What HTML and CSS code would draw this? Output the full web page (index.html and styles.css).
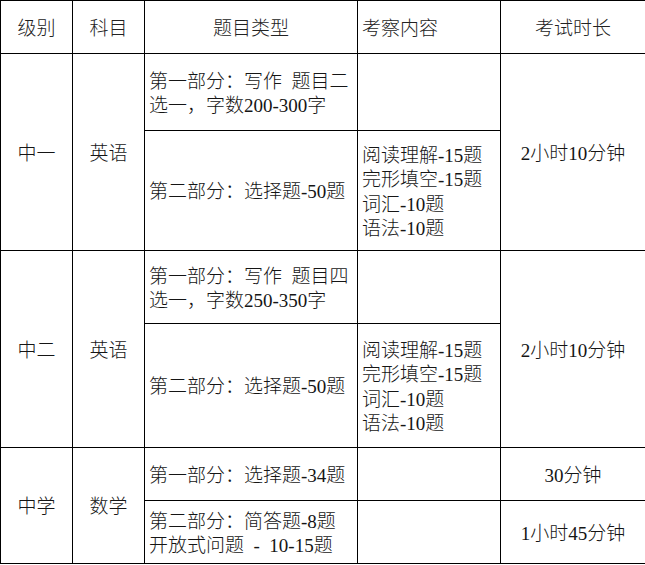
FILE: index.html
```html
<!DOCTYPE html>
<html lang="zh">
<head>
<meta charset="utf-8">
<title>考试安排</title>
<link rel="stylesheet" href="styles.css">
</head>
<body>
<table class="exam">
  <colgroup>
    <col class="c1"><col class="c2"><col class="c3"><col class="c4"><col class="c5">
  </colgroup>
  <tr class="h-head">
    <th>级别</th>
    <th>科目</th>
    <th>题目类型</th>
    <th class="left">考察内容</th>
    <th>考试时长</th>
  </tr>
  <tr class="h-r1a">
    <td rowspan="2" class="center">中一</td>
    <td rowspan="2" class="center">英语</td>
    <td class="left">第一部分：写作 题目二<br>选一，字数200-300字</td>
    <td class="left"></td>
    <td rowspan="2" class="center">2小时10分钟</td>
  </tr>
  <tr class="h-r1b">
    <td class="left">第二部分：选择题-50题</td>
    <td class="left">阅读理解-15题<br>完形填空-15题<br>词汇-10题<br>语法-10题</td>
  </tr>
  <tr class="h-r2a">
    <td rowspan="2" class="center">中二</td>
    <td rowspan="2" class="center">英语</td>
    <td class="left">第一部分：写作 题目四<br>选一，字数250-350字</td>
    <td class="left"></td>
    <td rowspan="2" class="center">2小时10分钟</td>
  </tr>
  <tr class="h-r2b">
    <td class="left">第二部分：选择题-50题</td>
    <td class="left">阅读理解-15题<br>完形填空-15题<br>词汇-10题<br>语法-10题</td>
  </tr>
  <tr class="h-r3a">
    <td rowspan="2" class="center">中学</td>
    <td rowspan="2" class="center">数学</td>
    <td class="left">第一部分：选择题-34题</td>
    <td class="left"></td>
    <td class="center">30分钟</td>
  </tr>
  <tr class="h-r3b">
    <td class="left">第二部分：简答题-8题<br>开放式问题 - 10-15题</td>
    <td class="left"></td>
    <td class="center">1小时45分钟</td>
  </tr>
</table>
</body>
</html>
```
FILE: styles.css
```css
html, body {
  margin: 0;
  padding: 0;
  background: #ffffff;
}

.exam {
  border-collapse: collapse;
  table-layout: fixed;
  width: 645px;
  font-family: "Liberation Serif", "Noto Sans CJK SC", serif;
  font-size: 19px;
  line-height: 24.5px;
  word-spacing: 0.25em;
  color: #151515;
}

.c1 { width: 72px; }
.c2 { width: 72px; }
.c3 { width: 213px; }
.c4 { width: 143px; }
.c5 { width: 145px; }

.exam th,
.exam td {
  border: 1px solid #000;
  padding: 4px 3px 0;
  vertical-align: middle;
  text-align: center;
  font-weight: 300;
  white-space: nowrap;
  overflow: hidden;
}

.exam th {
  color: #222;
}

.exam .left {
  text-align: left;
  padding-left: 4px;
}

.exam .center {
  text-align: center;
}

.h-head { height: 53px; }
.h-r1a { height: 77px; }
.h-r1b { height: 120px; }
.h-r2a { height: 73px; }
.h-r2b { height: 124px; }
.h-r3a { height: 53px; }
.h-r3b { height: 63px; }
```
